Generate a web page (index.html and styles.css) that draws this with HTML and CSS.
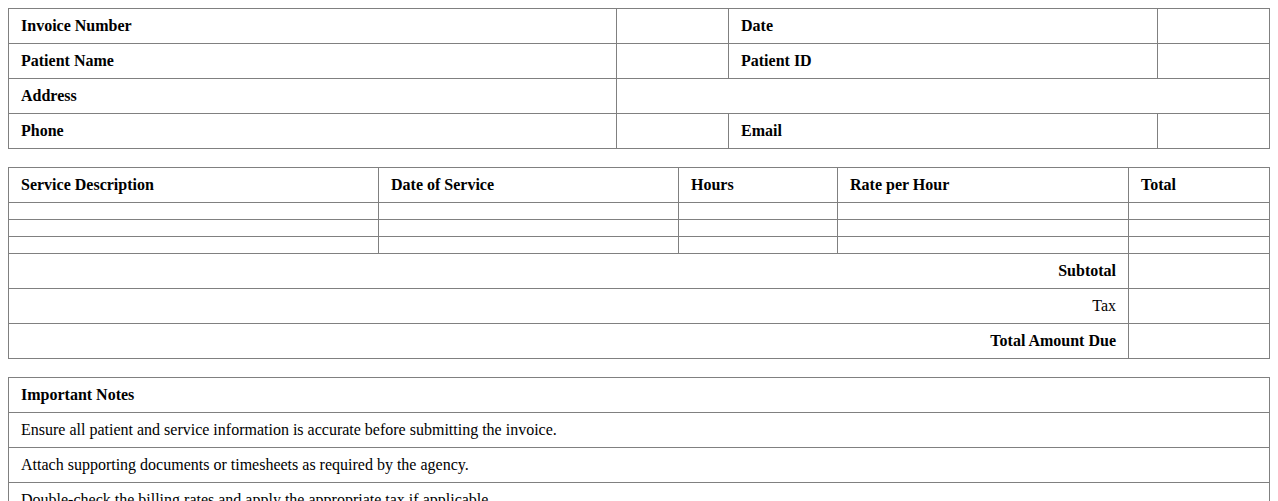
FILE: index.html
```html
<!DOCTYPE html>
<html>
<head>
<meta charset="utf-8">
<link rel="stylesheet" href="styles.css">
</head>
<body>
<table class="grid info">
  <colgroup><col class="c1"><col class="c2"><col class="c3"><col class="c4"></colgroup>
  <tr><th>Invoice Number</th><td></td><th>Date</th><td></td></tr>
  <tr><th>Patient Name</th><td></td><th>Patient ID</th><td></td></tr>
  <tr><th>Address</th><td colspan="3"></td></tr>
  <tr><th>Phone</th><td></td><th>Email</th><td></td></tr>
</table>

<table class="grid services">
  <colgroup><col class="s1"><col class="s2"><col class="s3"><col class="s4"><col class="s5"></colgroup>
  <tr><th>Service Description</th><th>Date of Service</th><th>Hours</th><th>Rate per Hour</th><th>Total</th></tr>
  <tr class="empty"><td></td><td></td><td></td><td></td><td></td></tr>
  <tr class="empty"><td></td><td></td><td></td><td></td><td></td></tr>
  <tr class="empty"><td></td><td></td><td></td><td></td><td></td></tr>
  <tr><th colspan="4" class="right">Subtotal</th><td></td></tr>
  <tr><td colspan="4" class="right">Tax</td><td></td></tr>
  <tr><th colspan="4" class="right">Total Amount Due</th><td></td></tr>
</table>

<table class="grid notes">
  <tr><th>Important Notes</th></tr>
  <tr><td>Ensure all patient and service information is accurate before submitting the invoice.</td></tr>
  <tr><td>Attach supporting documents or timesheets as required by the agency.</td></tr>
  <tr><td>Double-check the billing rates and apply the appropriate tax if applicable.</td></tr>
</table>
</body>
</html>
```
FILE: styles.css
```css
body {
  margin: 8px;
  font-family: "Liberation Serif", "Times New Roman", serif;
  font-size: 16px;
  color: #000;
  background: #fff;
}
.grid {
  width: 100%;
  border-collapse: collapse;
  table-layout: fixed;
  margin-bottom: 18px;
}
.grid th,
.grid td {
  border: 1px solid #808080;
  padding: 8px 12px;
  text-align: left;
  line-height: 18px;
  height: 18px;
}
.grid th { font-weight: bold; }
.grid .right { text-align: right; }
.grid tr.empty td { height: 0; line-height: 0; }
.c1 { width: 608px; }
.c2 { width: 112px; }
.c3 { width: 429px; }
.c4 { width: 112px; }
.s1 { width: 370px; }
.s2 { width: 300px; }
.s3 { width: 159px; }
.s4 { width: 291px; }
.s5 { width: 141px; }
```
